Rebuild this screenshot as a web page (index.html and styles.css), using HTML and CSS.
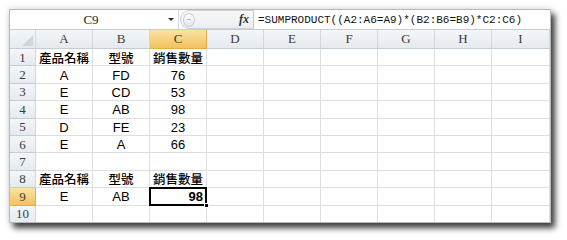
FILE: index.html
```html
<!DOCTYPE html>
<html>
<head>
<meta charset="utf-8">
<link rel="stylesheet" href="styles.css">
</head>
<body>
<div class="page">
  <div class="window">
    <div class="fbar">
      <div class="namebox"><span class="nb-text">C9</span><span class="arrow"></span></div>
      <div class="fx-area"><span class="knob"><span class="knob-dash"></span></span><span class="fx">fx</span></div>
      <div class="formula">=SUMPRODUCT((A2:A6=A9)*(B2:B6=B9)*C2:C6)</div>
    </div>
    <div class="sheet">
      <div class="hd corner"><span class="tri"></span></div>
      <div class="hd col">A</div><div class="hd col">B</div><div class="hd col sel">C</div><div class="hd col">D</div><div class="hd col">E</div><div class="hd col">F</div><div class="hd col">G</div><div class="hd col">H</div><div class="hd col">I</div>

      <div class="hd row">1</div>
      <div class="c zh">產品名稱</div><div class="c zh">型號</div><div class="c zh">銷售數量</div><div class="c"></div><div class="c"></div><div class="c"></div><div class="c"></div><div class="c"></div><div class="c"></div>

      <div class="hd row">2</div>
      <div class="c">A</div><div class="c">FD</div><div class="c">76</div><div class="c"></div><div class="c"></div><div class="c"></div><div class="c"></div><div class="c"></div><div class="c"></div>

      <div class="hd row">3</div>
      <div class="c">E</div><div class="c">CD</div><div class="c">53</div><div class="c"></div><div class="c"></div><div class="c"></div><div class="c"></div><div class="c"></div><div class="c"></div>

      <div class="hd row">4</div>
      <div class="c">E</div><div class="c">AB</div><div class="c">98</div><div class="c"></div><div class="c"></div><div class="c"></div><div class="c"></div><div class="c"></div><div class="c"></div>

      <div class="hd row">5</div>
      <div class="c">D</div><div class="c">FE</div><div class="c">23</div><div class="c"></div><div class="c"></div><div class="c"></div><div class="c"></div><div class="c"></div><div class="c"></div>

      <div class="hd row">6</div>
      <div class="c">E</div><div class="c">A</div><div class="c">66</div><div class="c"></div><div class="c"></div><div class="c"></div><div class="c"></div><div class="c"></div><div class="c"></div>

      <div class="hd row">7</div>
      <div class="c"></div><div class="c"></div><div class="c"></div><div class="c"></div><div class="c"></div><div class="c"></div><div class="c"></div><div class="c"></div><div class="c"></div>

      <div class="hd row">8</div>
      <div class="c zh">產品名稱</div><div class="c zh">型號</div><div class="c zh">銷售數量</div><div class="c"></div><div class="c"></div><div class="c"></div><div class="c"></div><div class="c"></div><div class="c"></div>

      <div class="hd row sel">9</div>
      <div class="c">E</div><div class="c">AB</div><div class="c active">98</div><div class="c"></div><div class="c"></div><div class="c"></div><div class="c"></div><div class="c"></div><div class="c"></div>

      <div class="hd row">10</div>
      <div class="c"></div><div class="c"></div><div class="c"></div><div class="c"></div><div class="c"></div><div class="c"></div><div class="c"></div><div class="c"></div><div class="c"></div>
    </div>
  </div>
</div>
</body>
</html>
```

FILE: styles.css
```css
html, body {
  margin: 0;
  padding: 0;
  background: #ffffff;
}

.page {
  width: 567px;
  height: 240px;
  padding: 9px 0 0 9px;
  box-sizing: border-box;
}

.window {
  width: 542px;
  height: 214px;
  background: #ffffff;
  border: 1px solid #b9b9b9;
  box-sizing: border-box;
  box-shadow: 4px 5px 6px rgba(0, 0, 0, 0.75), 0 -1px 8px rgba(0, 0, 0, 0.12);
  overflow: hidden;
  display: flex;
  flex-direction: column;
}

.fbar {
  display: flex;
  height: 20px;
  flex: none;
  border-bottom: 1px solid #c6ccd4;
  box-sizing: border-box;
  background: #ffffff;
}

.namebox {
  width: 169px;
  display: flex;
  align-items: center;
  border-right: 1px solid #d5d9de;
  box-sizing: border-box;
}

.nb-text {
  flex: 1;
  text-align: center;
  font-family: "Liberation Serif", serif;
  font-size: 13px;
  color: #222;
  padding-left: 4px;
}

.arrow {
  width: 0;
  height: 0;
  border-left: 3px solid transparent;
  border-right: 3px solid transparent;
  border-top: 3px solid #333;
  margin-right: 4px;
}

.fx-area {
  width: 74px;
  display: flex;
  align-items: center;
  justify-content: space-between;
  background: linear-gradient(#f7f8f9, #eceef1);
  border-radius: 9px 0 0 9px;
  border: 1px solid #cdd2d8;
  border-right: 1px solid #c2c7ce;
  box-sizing: border-box;
  margin-left: 1px;
  padding: 0 4px 0 2px;
}

.knob {
  width: 12px;
  height: 14px;
  border-radius: 50%;
  background: linear-gradient(#fdfdfd, #e4e7ea);
  border: 1px solid #c9ced4;
  box-sizing: border-box;
  display: flex;
  align-items: center;
  justify-content: center;
}

.knob-dash {
  width: 4px;
  height: 1px;
  background: #b5bac0;
}

.fx {
  font-family: "Liberation Serif", serif;
  font-style: italic;
  font-weight: bold;
  font-size: 12px;
  color: #333;
}

.formula {
  flex: 1;
  display: flex;
  align-items: center;
  padding-left: 4px;
  font-family: "Liberation Mono", monospace;
  font-size: 11px;
  color: #111;
  white-space: nowrap;
  overflow: hidden;
}

.sheet {
  display: grid;
  grid-template-columns: 26px repeat(8, 57px) 1fr;
  grid-template-rows: 19px repeat(10, 17.4px);
  flex: none;
}

.hd {
  background: linear-gradient(#f4f6f8, #e6eaef);
  border-right: 1px solid #d1d7df;
  border-bottom: 1px solid #c4ccd6;
  box-sizing: border-box;
  display: flex;
  align-items: center;
  justify-content: center;
  font-family: "Liberation Serif", serif;
  font-size: 13px;
  color: #3b3b3b;
}

.hd.row {
  padding-top: 1px;
}

.hd.sel {
  background: linear-gradient(#fbe3a3, #f2c25e);
  border-right-color: #e3ad4a;
  border-bottom-color: #e3ad4a;
}

.corner {
  position: relative;
}

.tri {
  position: absolute;
  right: 2px;
  bottom: 2px;
  width: 0;
  height: 0;
  border-left: 11px solid transparent;
  border-bottom: 11px solid #cfd5dc;
}

.c {
  border-right: 1px solid #dcdfe2;
  border-bottom: 1px solid #dcdfe2;
  box-sizing: border-box;
  display: flex;
  align-items: center;
  justify-content: center;
  padding-top: 1px;
  font-family: "Liberation Sans", sans-serif;
  font-size: 13px;
  color: #000;
  white-space: nowrap;
}

.c.zh {
  font-family: "Noto Sans CJK TC", sans-serif;
  font-size: 12.5px;
  font-weight: 500;
  padding-top: 0;
}

.c.active {
  position: relative;
  justify-content: flex-end;
  padding-right: 3px;
  font-weight: bold;
}

.c.active::after {
  content: "";
  position: absolute;
  left: -1px;
  top: -1px;
  right: -1px;
  bottom: -1px;
  border: 2px solid #000;
}

.c.active::before {
  content: "";
  position: absolute;
  right: -3px;
  bottom: -3px;
  width: 5px;
  height: 5px;
  background: #000;
  border: 1px solid #fff;
  box-sizing: border-box;
  z-index: 2;
}
```
